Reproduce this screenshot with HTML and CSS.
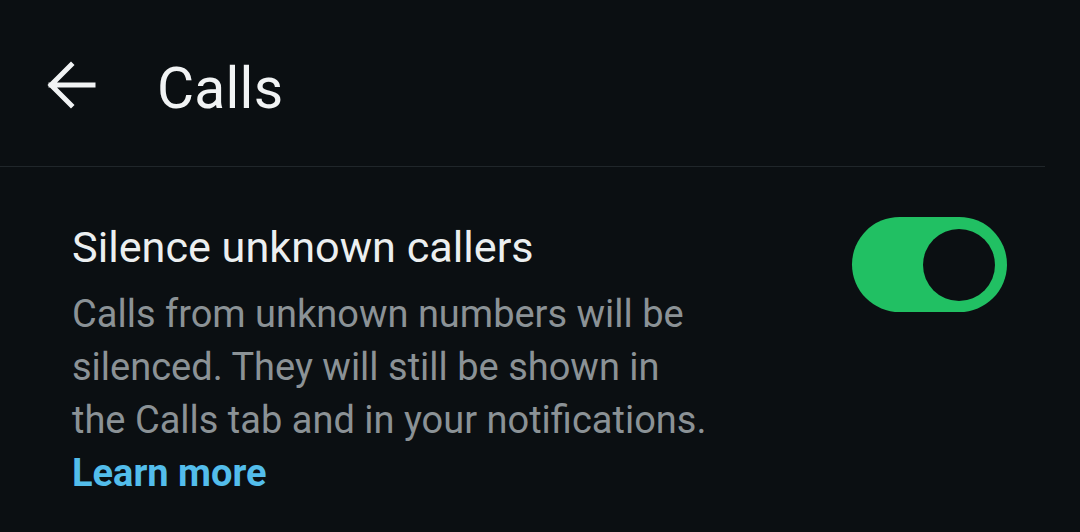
FILE: index.html
```html
<!DOCTYPE html>
<html>
<head>
<meta charset="utf-8">
<link rel="stylesheet" href="styles.css">
</head>
<body>
<div class="app">
  <header class="topbar">
    <svg class="back" width="50" height="48" viewBox="0 0 50 48">
      <path d="M47 24H5M25 4L5 24l20 20" fill="none" stroke="#f1f3f4" stroke-width="5" stroke-linecap="square" stroke-linejoin="miter"/>
    </svg>
    <h1 class="title">Calls</h1>
  </header>
  <div class="divider"></div>
  <section class="setting">
    <div class="texts">
      <div class="label">Silence unknown callers</div>
      <div class="desc">Calls from unknown numbers will be silenced. They will still be shown in the Calls tab and in your notifications.</div>
      <a class="link">Learn more</a>
    </div>
    <div class="toggle"><div class="thumb"></div></div>
  </section>
</div>
</body>
</html>
```
FILE: styles.css
```css
html, body {
  margin: 0;
  padding: 0;
  background: #0b0f12;
}
.app {
  width: 1080px;
  height: 532px;
  overflow: hidden;
  font-family: Roboto, "Noto Sans", sans-serif;
  color: #eef0f1;
}
.topbar {
  height: 166px;
  display: flex;
  align-items: center;
  padding-left: 46px;
  padding-top: 4px;
  box-sizing: border-box;
}
.back {
  display: block;
  flex: none;
}
.title {
  margin: 7px 0 0 61px;
  font-size: 57px;
  font-weight: 400;
  color: #f1f3f4;
  letter-spacing: 0.2px;
}
.divider {
  width: 1045px;
  height: 1px;
  background: #20262a;
}
.setting {
  display: flex;
  justify-content: space-between;
  padding: 50px 73px 0 72px;
}
.texts {
  width: 640px;
  padding-top: 5px;
}
.label {
  font-size: 43.2px;
  line-height: 52px;
  color: #eceff0;
}
.desc {
  font-size: 38px;
  line-height: 53px;
  color: #8b9296;
  margin-top: 14px;
}
.link {
  display: block;
  font-size: 38px;
  line-height: 53px;
  font-weight: 700;
  color: #53bdeb;
}
.toggle {
  width: 155px;
  height: 95px;
  border-radius: 48px;
  background: #21c063;
  display: flex;
  align-items: center;
  justify-content: flex-end;
  padding-right: 12px;
  box-sizing: border-box;
  flex: none;
}
.thumb {
  width: 72px;
  height: 72px;
  border-radius: 50%;
  background: #0b0f12;
}
```
